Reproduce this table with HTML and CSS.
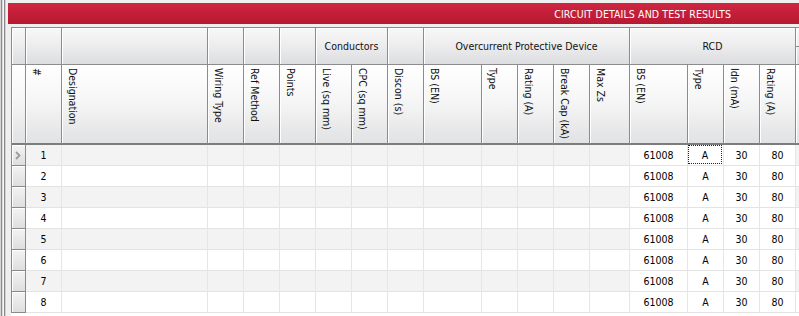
FILE: index.html
```html
<!DOCTYPE html>
<html lang="en">
<head>
<meta charset="utf-8">
<title>Circuit Details and Test Results</title>
<link rel="stylesheet" href="styles.css">
</head>
<body>
<div class="rail"></div>
<div class="main">
  <div class="titlebar"><span class="title">CIRCUIT DETAILS AND TEST RESULTS</span></div>
  <div class="gridwrap">
    <div class="grid">
      <!-- header row 1 -->
      <div class="h1"></div>
      <div class="h1"></div>
      <div class="h1"></div>
      <div class="h1"></div>
      <div class="h1"></div>
      <div class="h1"></div>
      <div class="h1 span2">Conductors</div>
      <div class="h1"></div>
      <div class="h1 span5">Overcurrent Protective Device</div>
      <div class="h1 span4">RCD</div>
      <div class="h1 split"><div class="split-top"></div></div>

      <!-- header row 2 -->
      <div class="h2"></div>
      <div class="h2"><span class="vt">#</span></div>
      <div class="h2"><span class="vt">Designation</span></div>
      <div class="h2"><span class="vt">Wiring Type</span></div>
      <div class="h2"><span class="vt">Ref Method</span></div>
      <div class="h2"><span class="vt">Points</span></div>
      <div class="h2"><span class="vt">Live (sq mm)</span></div>
      <div class="h2"><span class="vt">CPC (sq mm)</span></div>
      <div class="h2"><span class="vt">Discon (s)</span></div>
      <div class="h2"><span class="vt">BS (EN)</span></div>
      <div class="h2"><span class="vt">Type</span></div>
      <div class="h2"><span class="vt">Rating (A)</span></div>
      <div class="h2"><span class="vt">Break Cap (kA)</span></div>
      <div class="h2"><span class="vt">Max Zs</span></div>
      <div class="h2"><span class="vt">BS (EN)</span></div>
      <div class="h2"><span class="vt">Type</span></div>
      <div class="h2"><span class="vt">Idn (mA)</span></div>
      <div class="h2"><span class="vt">Rating (A)</span></div>
      <div class="h2"></div>

      <!-- row 1 -->
      <div class="rh"><svg class="chev" width="6" height="9" viewBox="0 0 6 9"><polyline points="1,1 4.5,4.5 1,8" fill="none" stroke="#9c9c9c" stroke-width="1.8"/></svg></div>
      <div class="c odd">1</div><div class="c odd"></div><div class="c odd"></div><div class="c odd"></div><div class="c odd"></div><div class="c odd"></div><div class="c odd"></div><div class="c odd"></div><div class="c odd"></div><div class="c odd"></div><div class="c odd"></div><div class="c odd"></div><div class="c odd"></div>
      <div class="c white">61008</div><div class="c white focus"><span class="focus-box">A</span></div><div class="c white">30</div><div class="c white">80</div><div class="c odd"></div>

      <!-- row 2 -->
      <div class="rh"></div>
      <div class="c">2</div><div class="c"></div><div class="c"></div><div class="c"></div><div class="c"></div><div class="c"></div><div class="c"></div><div class="c"></div><div class="c"></div><div class="c"></div><div class="c"></div><div class="c"></div><div class="c"></div>
      <div class="c white">61008</div><div class="c white">A</div><div class="c white">30</div><div class="c white">80</div><div class="c"></div>

      <!-- row 3 -->
      <div class="rh"></div>
      <div class="c odd">3</div><div class="c odd"></div><div class="c odd"></div><div class="c odd"></div><div class="c odd"></div><div class="c odd"></div><div class="c odd"></div><div class="c odd"></div><div class="c odd"></div><div class="c odd"></div><div class="c odd"></div><div class="c odd"></div><div class="c odd"></div>
      <div class="c white">61008</div><div class="c white">A</div><div class="c white">30</div><div class="c white">80</div><div class="c odd"></div>

      <!-- row 4 -->
      <div class="rh"></div>
      <div class="c">4</div><div class="c"></div><div class="c"></div><div class="c"></div><div class="c"></div><div class="c"></div><div class="c"></div><div class="c"></div><div class="c"></div><div class="c"></div><div class="c"></div><div class="c"></div><div class="c"></div>
      <div class="c white">61008</div><div class="c white">A</div><div class="c white">30</div><div class="c white">80</div><div class="c"></div>

      <!-- row 5 -->
      <div class="rh"></div>
      <div class="c odd">5</div><div class="c odd"></div><div class="c odd"></div><div class="c odd"></div><div class="c odd"></div><div class="c odd"></div><div class="c odd"></div><div class="c odd"></div><div class="c odd"></div><div class="c odd"></div><div class="c odd"></div><div class="c odd"></div><div class="c odd"></div>
      <div class="c white">61008</div><div class="c white">A</div><div class="c white">30</div><div class="c white">80</div><div class="c odd"></div>

      <!-- row 6 -->
      <div class="rh"></div>
      <div class="c">6</div><div class="c"></div><div class="c"></div><div class="c"></div><div class="c"></div><div class="c"></div><div class="c"></div><div class="c"></div><div class="c"></div><div class="c"></div><div class="c"></div><div class="c"></div><div class="c"></div>
      <div class="c white">61008</div><div class="c white">A</div><div class="c white">30</div><div class="c white">80</div><div class="c"></div>

      <!-- row 7 -->
      <div class="rh"></div>
      <div class="c odd">7</div><div class="c odd"></div><div class="c odd"></div><div class="c odd"></div><div class="c odd"></div><div class="c odd"></div><div class="c odd"></div><div class="c odd"></div><div class="c odd"></div><div class="c odd"></div><div class="c odd"></div><div class="c odd"></div><div class="c odd"></div>
      <div class="c white">61008</div><div class="c white">A</div><div class="c white">30</div><div class="c white">80</div><div class="c odd"></div>

      <!-- row 8 -->
      <div class="rh"></div>
      <div class="c">8</div><div class="c"></div><div class="c"></div><div class="c"></div><div class="c"></div><div class="c"></div><div class="c"></div><div class="c"></div><div class="c"></div><div class="c"></div><div class="c"></div><div class="c"></div><div class="c"></div>
      <div class="c white">61008</div><div class="c white">A</div><div class="c white">30</div><div class="c white">80</div><div class="c"></div>
    </div>
  </div>
</div>
</body>
</html>
```
FILE: styles.css
```css
html, body {
  margin: 0;
  padding: 0;
}
body {
  width: 799px;
  height: 316px;
  overflow: hidden;
  display: flex;
  background: #ffffff;
  font-family: "DejaVu Sans Condensed", "DejaVu Sans", sans-serif;
  font-stretch: condensed;
  font-size: 10.5px;
  color: #000000;
}
.rail {
  flex: none;
  width: 7px;
  height: 316px;
  background: linear-gradient(to right,
    #d6d6d6 0, #d6d6d6 1px,
    #8c8c8c 1px, #8c8c8c 2px,
    #dcdcdc 2px, #dcdcdc 3px,
    #f6f6f6 3px, #f6f6f6 4px,
    #8c8c8c 4px, #8c8c8c 5px,
    #cfcfcf 5px, #cfcfcf 6px,
    #f2f2f2 6px, #f2f2f2 7px);
}
.main {
  flex: 1;
  min-width: 0;
  display: flex;
  flex-direction: column;
  background: #efefef;
  padding-top: 3px;
  overflow: hidden;
}
.titlebar {
  flex: none;
  height: 21px;
  margin-left: 1px;
  background: linear-gradient(#d02641, #c11d37 60%, #b51a31);
  display: flex;
  align-items: center;
  justify-content: flex-end;
  padding-right: 68px;
}
.title {
  color: #ffffff;
  font-size: 10.5px;
  letter-spacing: 0.1px;
}
.gridwrap {
  flex: 1;
  margin-top: 3px;
  padding-left: 4px;
  background: linear-gradient(to right, #efefef 0, #efefef 4px, #ffffff 4px);
  overflow: hidden;
}
.grid {
  display: grid;
  width: max-content;
  grid-template-columns: 14px 36px 146px 36px 36px 36px 36px 36px 36px 58px 36px 36px 36px 40px 58px 36px 36px 36px 100px;
  grid-template-rows: 37px 80px repeat(8, 21px);
  border-left: 1px solid #8a8a8a;
  border-top: 1px solid #8a8a8a;
  background: #ffffff;
}
.grid > div {
  box-sizing: border-box;
}
.h1 {
  border-right: 1px solid #8c8c8c;
  border-bottom: 1px solid #8c8c8c;
  background: linear-gradient(#f8f8f8, #eeeeef 45%, #dcdde0);
  box-shadow: inset 1px 1px 0 #ffffff;
  display: flex;
  align-items: center;
  justify-content: center;
  color: #111;
}
.span2 { grid-column: span 2; }
.span5 { grid-column: span 5; }
.span4 { grid-column: span 4; }
.split {
  display: block;
}
.split-top {
  height: 18px;
  border-bottom: 1px solid #8c8c8c;
}
.h2 {
  border-right: 1px solid #8c8c8c;
  border-bottom: 2px solid #7c7c7c;
  background: linear-gradient(#ffffff, #f6f6f6 45%, #e1e2e4);
  box-shadow: inset 1px 0 0 #ffffff;
  display: flex;
  align-items: flex-start;
  padding: 3px 0 0 4px;
  color: #111;
}
.vt {
  writing-mode: vertical-rl;
  line-height: 13px;
  white-space: nowrap;
}
.rh {
  border-right: 1px solid #8a8a8a;
  border-bottom: 1px solid #8a8a8a;
  background: linear-gradient(#f3f3f3, #dedede);
  box-shadow: inset 1px 1px 0 #ffffff;
  display: flex;
  align-items: center;
  padding-left: 3px;
}
.chev {
  display: block;
}
.c {
  border-right: 1px solid #e6e6e6;
  border-bottom: 1px solid #e3e3e3;
  background: #ffffff;
  text-align: center;
  line-height: 20px;
  color: #000;
}
.c.odd {
  background: #f3f3f3;
}
.c.white {
  background: #ffffff;
}
.focus {
  padding: 0 1px 1px 0;
}
.focus-box {
  display: block;
  height: 19px;
  line-height: 18px;
  border: 1px dotted #222;
  box-sizing: border-box;
}
```
